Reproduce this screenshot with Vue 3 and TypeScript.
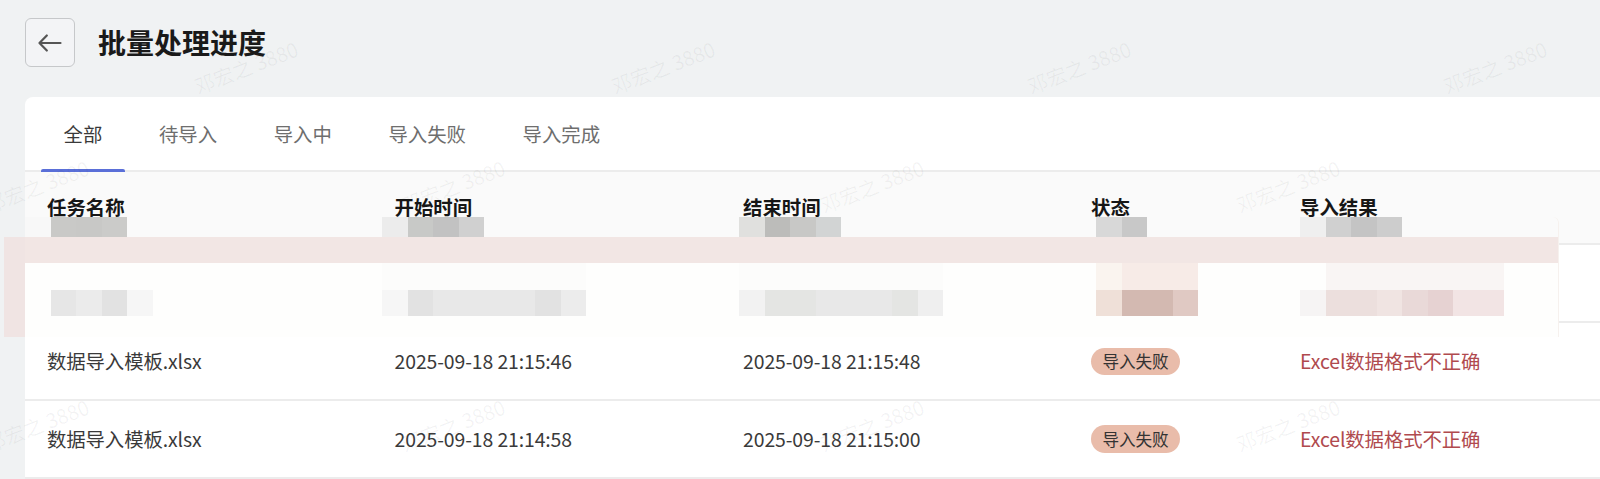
<script setup lang="ts">
interface Job { name: string; start: string; end: string }
const tabs = ['全部', '待导入', '导入中', '导入失败', '导入完成']
const jobs: Job[] = [
  { name: '数据导入模板.xlsx', start: '2025-09-18 21:15:46', end: '2025-09-18 21:15:48' },
  { name: '数据导入模板.xlsx', start: '2025-09-18 21:14:58', end: '2025-09-18 21:15:00' },
]
const marks: [number, number][] = [
  [246, 67], [663, 67], [1079, 67], [1495, 67],
  [37, 186], [453, 186], [872, 186], [1288, 186],
  [37, 425], [453, 425], [872, 425], [1288, 425],
]
// mosaic cells: [row, first column, span, colour]
const cells: [number, number, number, string][] = [
  [0, 0, 1, '#f8f8f8'], [0, 1, 1, '#c9c9c7'], [0, 2, 1, '#c8c8c6'], [0, 3, 1, '#cbcbc9'],
  [0, 14, 1, '#ececec'], [0, 15, 1, '#c8c9c7'], [0, 16, 1, '#c2c2c2'], [0, 17, 1, '#d0d0d0'],
  [0, 28, 1, '#e0e0de'], [0, 29, 1, '#bcbcba'], [0, 30, 1, '#c8c8c6'], [0, 31, 1, '#d2d4d4'],
  [0, 42, 1, '#d8d8d8'], [0, 43, 1, '#c8c8c8'],
  [0, 50, 1, '#efefef'], [0, 51, 1, '#d0d0d0'], [0, 52, 1, '#c4c4c4'], [0, 53, 1, '#cdcdcd'],
  [2, 14, 8, '#fcfcfb'], [2, 28, 8, '#fcfcfb'], [2, 42, 1, '#faf4ef'], [2, 43, 3, '#f7ebe7'], [2, 51, 7, '#f9f5f4'],
  [3, 1, 1, '#e6e6e6'], [3, 2, 1, '#ebebeb'], [3, 3, 1, '#e2e2e2'], [3, 4, 1, '#f6f6f6'],
  [3, 14, 1, '#f6f6f6'], [3, 15, 1, '#e2e2e2'], [3, 16, 4, '#e8e8e8'], [3, 20, 1, '#e2e2e2'], [3, 21, 1, '#ececec'],
  [3, 28, 1, '#f2f2f2'], [3, 29, 2, '#e4e5e3'], [3, 31, 3, '#e8e8e8'], [3, 34, 1, '#e4e5e3'], [3, 35, 1, '#efefef'],
  [3, 42, 1, '#efe0d8'], [3, 43, 2, '#d3b9b1'], [3, 45, 1, '#e0c9c3'],
  [3, 50, 1, '#f6f4f4'], [3, 51, 2, '#ecdfdd'], [3, 53, 1, '#f0e4e2'], [3, 54, 1, '#e9d9d8'], [3, 55, 1, '#e6d2d2'], [3, 56, 2, '#f2e4e4'],
]
</script>

<template>
  <div class="page">
    <header class="top">
      <button class="back" type="button" aria-label="返回">
        <svg width="24" height="24" viewBox="0 0 24 24" fill="none" stroke="#555" stroke-width="2.2" stroke-linecap="round" stroke-linejoin="round">
          <path d="M22.5 12H1.5M8.8 4.5 1.5 12l7.3 7.5" />
        </svg>
      </button>
      <h1 class="title">批量处理进度</h1>
    </header>

    <section class="card">
      <nav class="tabs">
        <div v-for="(t, i) in tabs" :key="t" class="tab" :class="{ active: i === 0 }">{{ t }}</div>
      </nav>
      <div class="row head">
        <div>任务名称</div><div>开始时间</div><div>结束时间</div><div>状态</div><div>导入结果</div>
      </div>
      <div class="row"></div>
      <div v-for="(j, i) in jobs" :key="i" class="row">
        <div>{{ j.name }}</div>
        <div>{{ j.start }}</div>
        <div>{{ j.end }}</div>
        <div><span class="pill" :class="{ tall: i === 1 }">导入失败</span></div>
        <div class="err">Excel数据格式不正确</div>
      </div>
    </section>

    <div class="redact-side"></div>
    <div class="redact">
      <div class="band"></div>
      <div
        v-for="(c, i) in cells"
        :key="i"
        class="cell"
        :style="{ gridRow: c[0] + 1, gridColumn: `${c[1] + 1} / span ${c[2]}`, background: c[3] }"
      ></div>
    </div>

    <div
      v-for="(m, i) in marks"
      :key="'m' + i"
      class="mark"
      :style="{ left: m[0] + 'px', top: m[1] + 'px' }"
    >邓宏之 3880</div>
  </div>
</template>

<style>
html, body { margin: 0; overflow: hidden; }
</style>

<style scoped>
.page {
  position: relative;
  width: 1600px;
  height: 479px;
  overflow: hidden;
  background: #f0f2f3;
  font-family: "Noto Sans CJK SC", "Noto Sans", sans-serif;
  color: #2f2f2f;
}
.top {
  display: flex;
  align-items: center;
  gap: 23px;
  padding: 18px 0 0 25px;
  height: 49px;
}
.back {
  display: flex;
  align-items: center;
  justify-content: center;
  width: 50px;
  height: 49px;
  padding: 0;
  border: 1px solid #c6c8ca;
  border-radius: 6px;
  background: #f3f4f6;
}
.title {
  margin: -2px 0 0;
  font-size: 28px;
  line-height: 40px;
  font-weight: 700;
  color: #1a1a1a;
}
.card {
  margin: 30px 0 0 25px;
  background: #fff;
  border-radius: 8px 0 0 0;
  height: 382px;
}
.tabs {
  display: flex;
  gap: 11.6px;
  height: 75px;
  padding-left: 16px;
  border-bottom: 2px solid #ececec;
  box-sizing: border-box;
}
.tab {
  position: relative;
  padding: 0 22.5px;
  height: 75px;
  line-height: 73px;
  font-size: 19.4px;
  color: #6e6e6e;
}
.tab.active { color: #3a3a3a; }
.tab.active::after {
  content: "";
  position: absolute;
  left: 0;
  right: 0;
  bottom: 0;
  height: 3px;
  border-radius: 2px 2px 0 0;
  background: #5a6fd8;
}
.row {
  display: grid;
  grid-template-columns: 347.6px 348.5px 348px 209px 1fr;
  align-items: center;
  height: 78px;
  box-sizing: border-box;
  padding: 0 0 2px 22px;
  border-bottom: 2px solid #ececec;
  font-size: 19.4px;
  letter-spacing: -0.1px;
  color: #3a3a3a;
}
.row.head {
  height: 73px;
  background: #fafafa;
  font-weight: 700;
  color: #161616;
  letter-spacing: 0;
}
.pill {
  display: inline-block;
  width: 89px;
  height: 27px;
  line-height: 27px;
  border-radius: 14px;
  background: #e9bcaa;
  text-align: center;
  font-size: 16.6px;
  color: #333;
}
.pill.tall { height: 28px; line-height: 28px; }
.err { color: #b04a4e; }
.redact-side {
  position: absolute;
  left: 4px;
  top: 237px;
  width: 21px;
  height: 100px;
  background: #f0e4e3;
}
.redact {
  position: absolute;
  left: 25px;
  top: 217px;
  width: 1533px;
  height: 120px;
  display: grid;
  grid-template-columns: repeat(60, 25.5px);
  grid-template-rows: 20px 26px 27px 26px 21px;
  background: linear-gradient(#fafafa 0 20px, #fefefd 20px);
  border-radius: 0 6px 0 0;
  box-shadow: 1px 0 0 #f6f1ee;
}
.band {
  grid-row: 2;
  grid-column: 1 / -1;
  width: 1533px;
  background: #f2e6e4;
}
.mark {
  position: absolute;
  transform: translate(-50%, -50%) rotate(-21deg);
  font-size: 20px;
  white-space: nowrap;
  color: rgba(60, 60, 70, 0.06);
  font-family: "Noto Sans CJK SC", "Noto Sans", sans-serif;
  pointer-events: none;
}
</style>
